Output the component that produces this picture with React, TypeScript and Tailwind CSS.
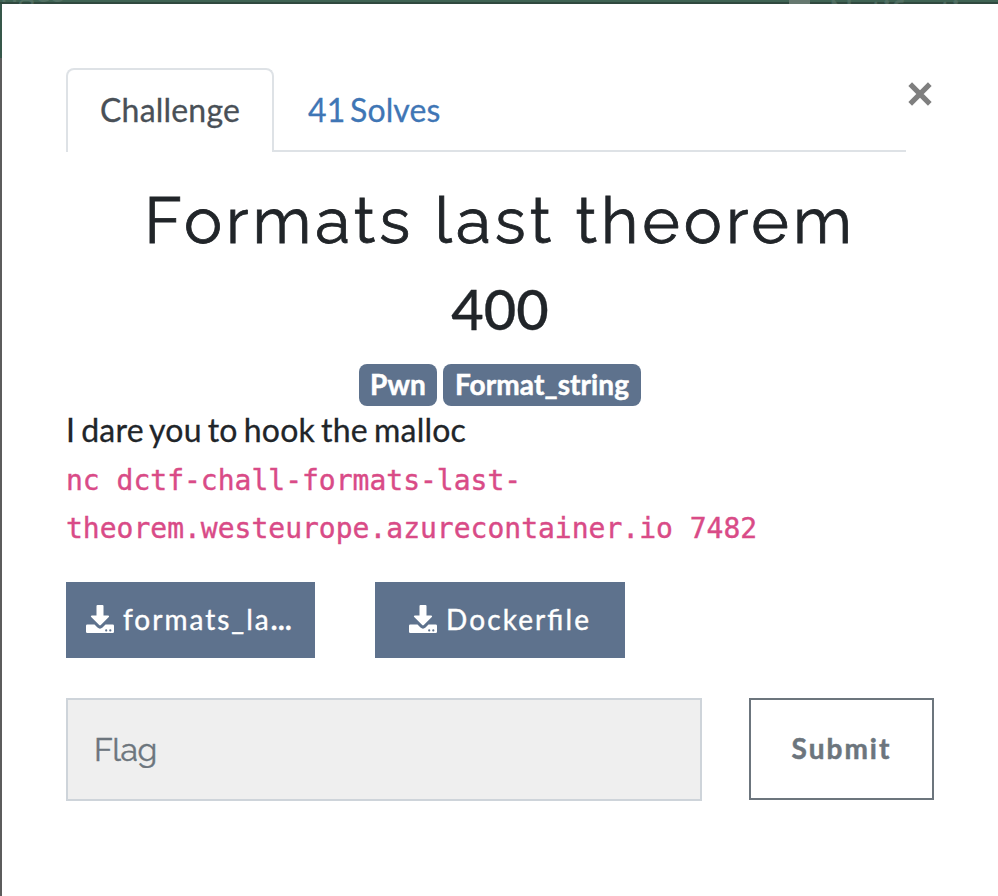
type FileLink = { label: string; className: string };

const files: FileLink[] = [
  { label: "formats_la...", className: "w-[249px] pl-[20px]" },
  { label: "Dockerfile", className: "w-[250px] pl-[34px]" },
];

const tags = [
  { label: "Pwn", className: "w-[78px]" },
  { label: "Format_string", className: "w-[198px]" },
];

function DownloadIcon() {
  return (
    <svg viewBox="0 0 28 28" className="h-[28px] w-[28px] shrink-0" fill="currentColor">
      <path d="M11.500 0h5q1 0 1 1v9.500h4.600c1 0 1.300 1 .700 1.600l-8 8q-.800.800-1.600 0l-8-8c-.600-.600-.300-1.600.700-1.600h4.600V1q0-1 1-1Z" />
      <path
        fillRule="evenodd"
        d="M1.300 19.500h7.200l3 3q2.500 2.300 5 0l3-3h7.200q1.300 0 1.300 1.300v6q0 1.200-1.300 1.200H1.300Q0 28 0 26.800v-6q0-1.300 1.300-1.300ZM20.200 24.300a1.100 1.100 0 1 0 0 2.200a1.100 1.100 0 1 0 0-2.200ZM24.300 24.300a1.100 1.100 0 1 0 0 2.200a1.100 1.100 0 1 0 0-2.200Z"
      />
    </svg>
  );
}

export default function App() {
  return (
    <div className="h-[896px] w-[998px] overflow-hidden bg-white font-['Lato',sans-serif] text-[#212529]">
      <div className="relative h-[4px] overflow-hidden bg-linear-to-b from-[#3f6353] from-50% to-[#30493f] to-50% text-[32px] leading-[40px] text-[#5f7b70]">
        <span className="absolute -top-[30px] -left-[87px] opacity-60">Challenges</span>
        <span className="absolute top-0 left-[789px] h-[4px] w-[21px] bg-[#66786f]" />
        <span className="absolute -top-[8px] left-[829px] opacity-60 [-webkit-text-stroke:0.5px]">Notifications</span>
      </div>
      <div className="flex h-[892px]">
        <div className="w-[2px] bg-[#5c5c5c]">
          <div className="h-[54px] bg-[#36574a]" />
        </div>
        <main className="w-[996px] px-16 pt-16">
          <div className="flex justify-between">
            <nav className="flex h-[84px] w-[840px] text-[32px] leading-[48px] tracking-[0.2px] [-webkit-text-stroke:0.3px]">
              <div className="w-[208px] rounded-t-lg border-2 border-b-0 border-[#dee2e6] pt-[16px] pl-[32px] text-[#495057]">Challenge</div>
              <div className="grow border-b-2 border-[#dee2e6] pt-[18px] pl-[34px] tracking-[0.1px] text-[#3f76b5] [word-spacing:-3.500px]">41 Solves</div>
            </nav>
            <button aria-label="Close" className="mt-[14px] mr-[2px] h-[24px] w-[24px] text-[#7f7f7f]">
              <svg viewBox="0 0 24 24" className="h-6 w-6" fill="none" stroke="currentColor" strokeWidth="5.2">
                <path d="M2.200 2.200l19.600 19.600M21.800 2.200L2.200 21.800" />
              </svg>
            </button>
          </div>
          <h2 className="mt-[29px] h-[80px] text-center font-['Raleway','Lato',sans-serif] text-[64px] leading-[80px] tracking-[4px] [-webkit-text-stroke:0.8px]">Formats last theorem</h2>
          <h3 className="mt-[13px] h-[70px] text-center text-[56px] leading-[70px] font-medium [-webkit-text-stroke:0.3px]">400</h3>
          <div className="mt-[20px] flex h-[42px] justify-center gap-[6px] text-[28px] leading-[40px] font-bold text-white [-webkit-text-stroke:0.5px]">
            {tags.map((tag) => (
              <span key={tag.label} className={`${tag.className} rounded-lg bg-[#5e728d] text-center tracking-[0.1px]`}>{tag.label}</span>
            ))}
          </div>
          <p className="text-[32px] leading-[48px] tracking-[0.2px] [word-spacing:-2.3px] [-webkit-text-stroke:0.3px]">I dare you to hook the malloc</p>
          <code className="mt-[3px] block font-['DejaVu_Sans_Mono',monospace] text-[28px] leading-[48px] text-[#d94b87] [-webkit-text-stroke:0.4px]">
            nc dctf-chall-formats-last-
            <br />
            theorem.westeurope.azurecontainer.io 7482
          </code>
          <div className="mt-[29px] flex gap-[60px] text-[28px] leading-[42px] tracking-[2px] text-white">
            {files.map((file) => (
              <button key={file.label} className={`${file.className} flex h-[76px] items-center gap-[9px] bg-[#5e728d] pb-[2px] whitespace-nowrap [-webkit-text-stroke:0.4px]`}>
                <DownloadIcon />
                {file.label === "Dockerfile" ? (
                  <span className="tracking-[2.1px] [font-feature-settings:'liga'_1]">{file.label}</span>
                ) : (
                  <span>formats_la<span className="font-bold tracking-[0.5px]">...</span></span>
                )}
              </button>
            ))}
          </div>
          <form className="mt-[40px] flex gap-[47px]">
            <input
              placeholder="Flag"
              className="h-[103px] w-[636px] border-2 border-[#ced4da] bg-[#efefef] px-[26px] font-['Raleway','Lato',sans-serif] text-[32px] tracking-[-0.5px] placeholder:text-[#6c757d] placeholder:opacity-100 [-webkit-text-stroke:0.4px]"
            />
            <button type="button" className="h-[102px] w-[185px] border-2 border-[#6c757d] pb-[2px] text-[28px] font-bold tracking-[2px] text-[#6c757d] [-webkit-text-stroke:0.5px]">Submit</button>
          </form>
        </main>
      </div>
    </div>
  );
}
